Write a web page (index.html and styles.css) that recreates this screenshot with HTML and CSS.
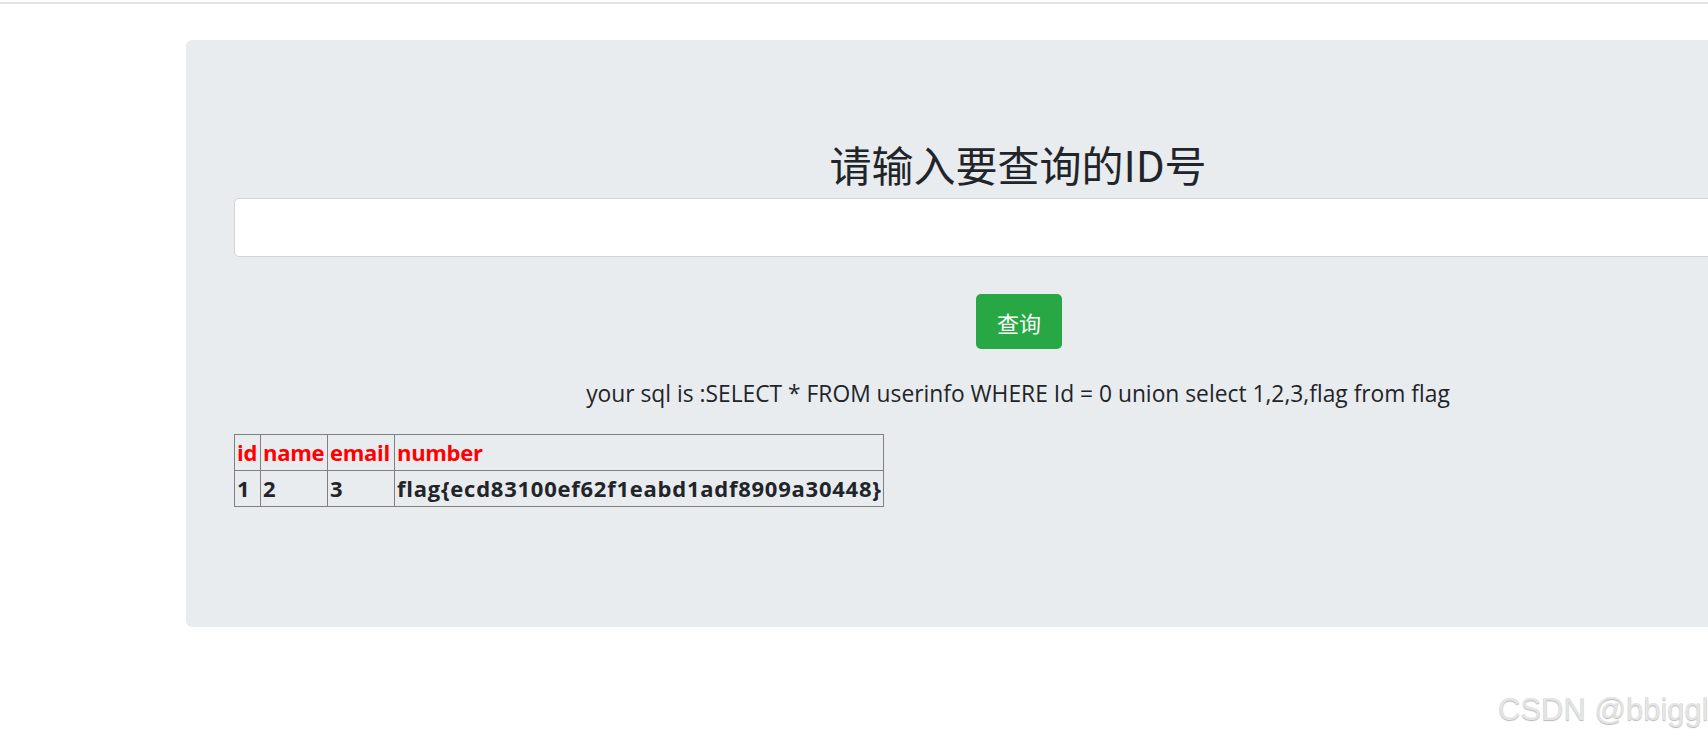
FILE: index.html
```html
<!DOCTYPE html>
<html lang="zh">
<head>
<meta charset="utf-8">
<title>查询</title>
<link rel="stylesheet" href="styles.css">
</head>
<body>
<div class="topline"></div>
<main class="page">
  <section class="jumbotron">
    <h1 class="title">请输入要查询的ID号</h1>
    <input class="id-input" type="text" name="id">
    <button class="btn-query" type="button">查询</button>
    <p class="sql">your sql is :SELECT * FROM userinfo WHERE Id = 0 union select 1,2,3,flag from flag</p>
    <table class="result">
      <tr>
        <th class="c-id">id</th>
        <th class="c-name">name</th>
        <th class="c-email">email</th>
        <th class="c-number">number</th>
      </tr>
      <tr>
        <td>1</td>
        <td>2</td>
        <td>3</td>
        <td class="flag">flag{ecd83100ef62f1eabd1adf8909a30448}</td>
      </tr>
    </table>
  </section>
</main>
<div class="watermark">CSDN @bbiggl</div>
</body>
</html>
```

FILE: styles.css
```css
html, body {
  margin: 0;
  padding: 0;
  overflow: hidden;
  background: #ffffff;
  width: 1708px;
  height: 741px;
}

body {
  font-family: "Open Sans", "Noto Sans", "Noto Sans CJK SC", sans-serif;
  color: #212529;
  position: relative;
}

.topline {
  margin-top: 2px;
  height: 2px;
  background: #e3e3e3;
}

.page {
  padding-top: 36px;
  padding-left: 186px;
}

.jumbotron {
  width: 1664px;
  box-sizing: border-box;
  background: #e9ecef;
  border-radius: 6px;
  padding: 97px 48px 120px 48px;
  display: flex;
  flex-direction: column;
  align-items: stretch;
}

.title {
  margin: 0;
  font-family: "Noto Sans CJK SC", "Noto Sans", sans-serif;
  font-size: 42px;
  font-weight: 400;
  line-height: 53px;
  text-align: center;
  color: #212529;
}

.id-input {
  margin: 8px 0 0 0;
  height: 59px;
  box-sizing: border-box;
  border: 1px solid #ced4da;
  border-radius: 5px;
  background: #ffffff;
  outline: none;
}

.btn-query {
  align-self: center;
  margin-top: 37px;
  width: 86px;
  height: 55px;
  border: none;
  border-radius: 5px;
  background: #28a745;
  color: #ffffff;
  font-family: "Noto Sans CJK SC", sans-serif;
  font-size: 22px;
  padding: 0;
  position: relative;
  left: 1px;
}

.sql {
  margin: 28px 0 0 0;
  text-align: center;
  font-size: 22.8px;
  line-height: 34px;
}

.result {
  margin-top: 23px;
  align-self: flex-start;
  border-collapse: collapse;
  table-layout: fixed;
  width: 647px;
  border: 1px solid #808080;
  font-weight: 700;
  font-size: 22px;
}

.result th,
.result td {
  border: 1px solid #808080;
  padding: 1px 0 1px 2px;
  line-height: 33px;
  text-align: left;
  white-space: nowrap;
  overflow: hidden;
}

.result th {
  color: #ff0000;
  letter-spacing: -0.3px;
}

.result td {
  color: #212529;
}

.result .flag {
  letter-spacing: 0.75px;
}

.c-id { width: 23px; }
.c-name { width: 64px; }
.c-email { width: 64px; }
.c-number { width: 486px; }

.watermark {
  position: absolute;
  left: 1498px;
  top: 692px;
  font-family: "Liberation Sans", Arial, sans-serif;
  font-size: 31px;
  color: #e4e4e4;
  text-shadow: 0 1px 1px rgba(0, 0, 0, 0.28);
  white-space: nowrap;
}
```
